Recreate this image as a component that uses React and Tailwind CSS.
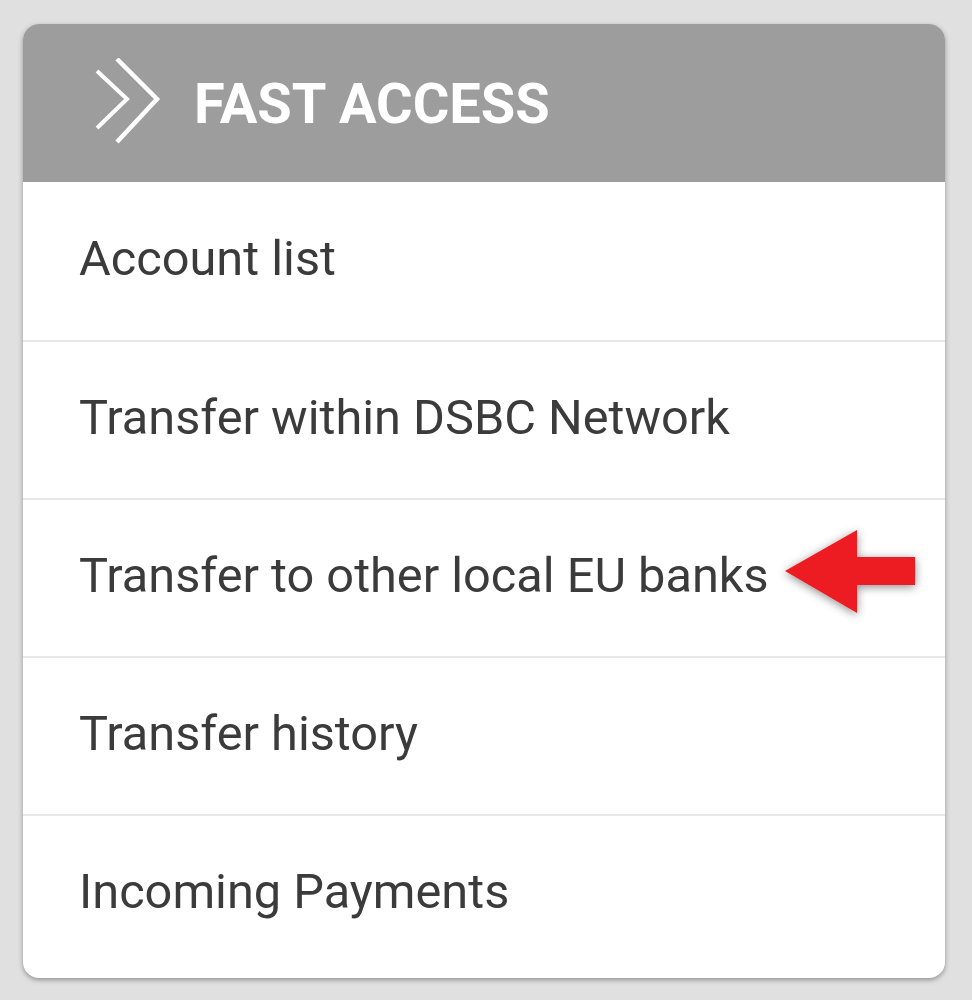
import React from "react";

const items = [
  "Account list",
  "Transfer within DSBC Network",
  "Transfer to other local EU banks",
  "Transfer history",
  "Incoming Payments",
];

export default function App() {
  return (
    <div className="w-[972px] h-[1000px] bg-[#e0e0e0] pt-[24px] pl-[23px]" style={{ fontFamily: "Roboto, 'Liberation Sans', sans-serif" }}>
      <div className="w-[922px] h-[954px] bg-white rounded-[16px] overflow-hidden shadow-[0_2px_5px_rgba(0,0,0,0.35)] flex flex-col">
        <div className="h-[158px] bg-[#9e9d9e] flex items-center shrink-0">
          <svg width="70" height="90" viewBox="0 0 70 90" className="ml-[72px]">
            <polyline points="2,13 32,41 2,70" fill="none" stroke="white" strokeWidth="4" />
            <polyline points="22,1 62,41 22,84" fill="none" stroke="white" strokeWidth="4.5" />
          </svg>
          <span className="ml-[29px] text-white font-bold text-[56px] leading-none mt-[2px]">FAST ACCESS</span>
        </div>
        {items.map((t, i) => (
          <div
            key={t}
            className={`h-[158px] shrink-0 flex items-center pl-[56px] pb-[4px] relative ${i > 0 ? "border-t-2 border-[#e8e8e8]" : ""}`}
          >
            <span className="text-[#3b3b3b] text-[48.7px] leading-none">{t}</span>
            {i === 2 && (
              <svg width="150" height="110" viewBox="0 0 150 110" className="absolute left-[747px] top-[18px]" style={{ overflow: "visible" }}>
                <defs>
                  <filter id="sh" x="-30%" y="-30%" width="160%" height="160%">
                    <feDropShadow dx="0" dy="2" stdDeviation="5" floodColor="#000" floodOpacity="0.45" />
                  </filter>
                </defs>
                <polygon points="15,53 87,12 87,39 145,39 145,67 87,67 87,95" fill="#ed1c24" filter="url(#sh)" />
              </svg>
            )}
          </div>
        ))}
      </div>
    </div>
  );
}
